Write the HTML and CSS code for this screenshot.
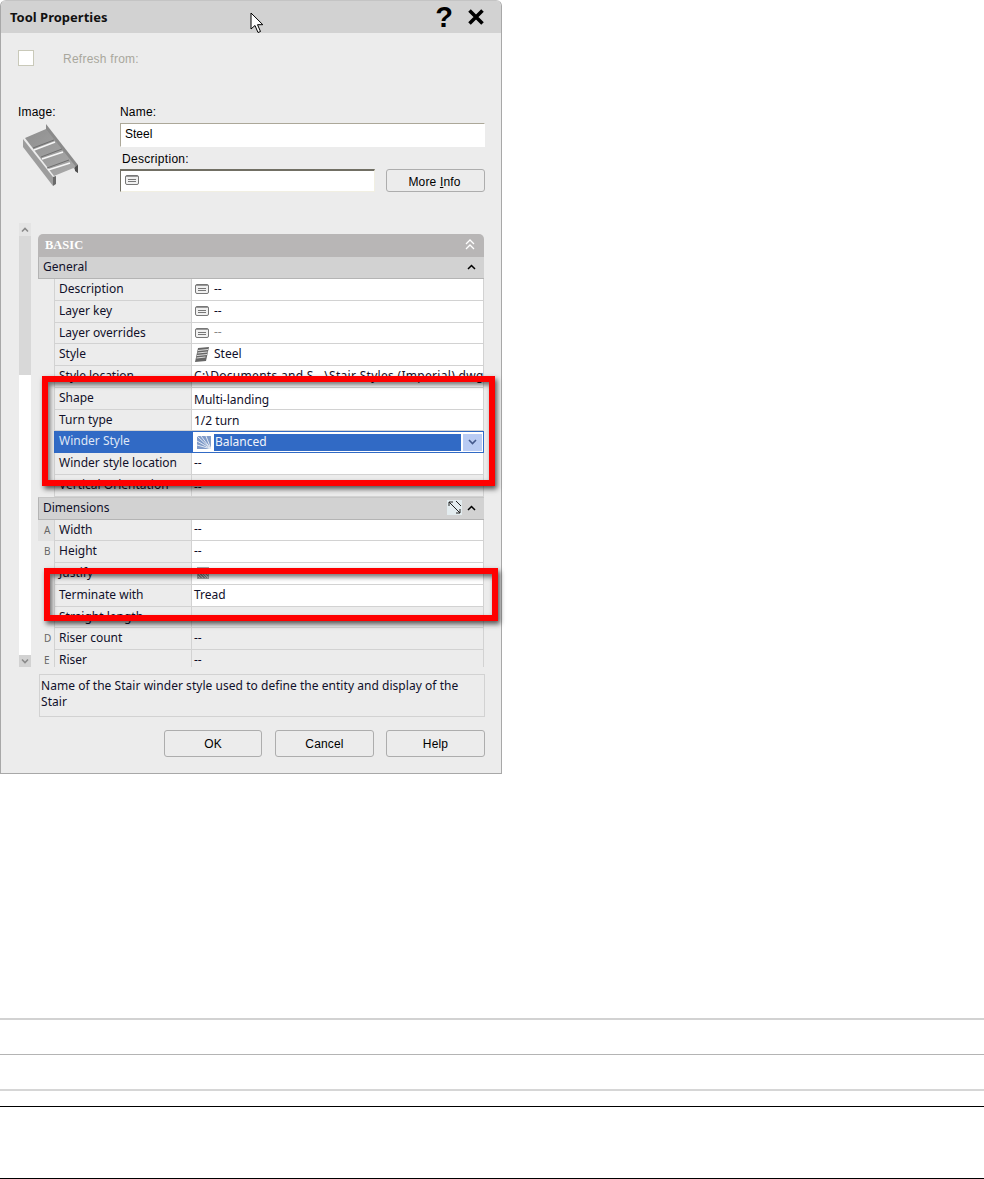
FILE: index.html
```html
<!DOCTYPE html>
<html lang="en">
<head>
<meta charset="utf-8">
<title>Tool Properties</title>
<link rel="stylesheet" href="styles.css">
</head>
<body>
<svg width="0" height="0" class="defs">
  <symbol id="note" viewBox="0 0 14 10">
    <rect x="0.5" y="0.5" width="13" height="9" rx="1.5" fill="#f0f0f0" stroke="#777"/>
    <path d="M1 1.500h12" stroke="#999" fill="none"/>
    <path d="M3 4.500h8M3 6.500h8" stroke="#777" fill="none"/>
  </symbol>
</svg>
<div class="dialog">
  <div class="titlebar">
    <span class="title">Tool Properties</span>
    <span class="help-mark">?</span>
    <svg class="close" width="18" height="16" viewBox="0 0 18 16"><path d="M2.500 1.500l13 13M15.500 1.500l-13 13" stroke="#000" stroke-width="3.600" fill="none"/></svg>
  </div>
  <div class="refresh">
    <span class="check"></span>
    <span class="disabled-label">Refresh from:</span>
  </div>
  <div class="details">
    <div class="image-col">
      <div class="ui-label">Image:</div>
      <svg class="stair" width="58" height="64" viewBox="22 124 58 64">
        <defs>
          <linearGradient id="tread" x1="0" y1="0" x2="1" y2="1">
            <stop offset="0" stop-color="#8f8f8f"/>
            <stop offset="1" stop-color="#aaaaaa"/>
          </linearGradient>
        </defs>
        <path d="M46 124l32 41v8l-3-3-29-40z" fill="#8a8a8a"/>
        <path d="M25 138l21-9 30 38-22 9z" fill="url(#tread)"/>
        <path d="M33 148l21-8M41 157l21-8M47 168l22-8" stroke="#6e6e6e" fill="none"/>
        <path d="M34 150l21-8M42 159l21-7M48 170l22-7" stroke="#f6f6f6" stroke-width="1.800" fill="none"/>
        <path d="M23 139l30 38v9L23 147z" fill="#9d9d9d"/>
        <path d="M53 177l3-1v8l-3 2z" fill="#6a6a6a"/>
        <path d="M75 167l3-2v8l-3-2z" fill="#4f4f4f"/>
      </svg>
    </div>
    <div class="fields">
      <div class="ui-label">Name:</div>
      <div class="input name-input">Steel</div>
      <div class="ui-label desc-label">Description:</div>
      <div class="desc-row">
        <div class="input desc-input"><svg class="note" width="14" height="10"><use href="#note"/></svg></div>
        <button class="btn more">More <u>I</u>nfo</button>
      </div>
    </div>
  </div>
  <div class="props">
    <div class="scrollbar">
      <div class="sb-btn">
        <svg width="8" height="6" viewBox="0 0 8 6"><path d="M1 4.500l3-3 3 3" stroke="#8a8a8a" stroke-width="1.600" fill="none"/></svg>
      </div>
      <div class="sb-thumb"></div>
      <div class="sb-track"></div>
      <div class="sb-btn sb-down">
        <svg width="8" height="6" viewBox="0 0 8 6"><path d="M1 1.500l3 3 3-3" stroke="#8a8a8a" stroke-width="1.600" fill="none"/></svg>
      </div>
    </div>
    <div class="grid">
      <div class="basic">
        <span>BASIC</span>
        <svg width="10" height="12" viewBox="0 0 10 12"><path d="M1 5l4-4 4 4M1 10l4-4 4 4" stroke="#fff" stroke-width="1.300" fill="none"/></svg>
      </div>
      <div class="section">
        <span>General</span>
        <svg class="chev" width="9" height="6" viewBox="0 0 9 6"><path d="M1 5l3.500-3.500L8 5" stroke="#000" stroke-width="1.500" fill="none"/></svg>
      </div>
      <div class="row"><span class="key"></span><span class="name">Description</span><span class="val"><svg class="note" width="14" height="10"><use href="#note"/></svg>--</span></div>
      <div class="row"><span class="key"></span><span class="name">Layer key</span><span class="val"><svg class="note" width="14" height="10"><use href="#note"/></svg>--</span></div>
      <div class="row"><span class="key"></span><span class="name">Layer overrides</span><span class="val muted"><svg class="note" width="14" height="10"><use href="#note"/></svg>--</span></div>
      <div class="row"><span class="key"></span><span class="name">Style</span><span class="val">
        <svg class="mini-stair" width="16" height="15" viewBox="0 0 16 15"><path d="M4 1l11-1-3 14-11 1z" fill="#666"/><path d="M4 3.500l10-1M3.500 6l10-1M3 8.500l10-1M2.500 11l9-1" stroke="#ddd" fill="none"/></svg>Steel</span></div>
      <div class="row"><span class="key"></span><span class="name">Style location</span><span class="val path">C:\Documents and S...\Stair Styles (Imperial).dwg</span></div>
      <div class="row"><span class="key"></span><span class="name">Shape</span><span class="val low">Multi-landing</span></div>
      <div class="row"><span class="key"></span><span class="name">Turn type</span><span class="val low">1/2 turn</span></div>
      <div class="row selected"><span class="key"></span><span class="name">Winder Style</span>
        <span class="val combo">
          <svg class="winder" width="14" height="13" viewBox="0 0 14 13"><rect width="14" height="13" fill="#7f9ac8"/><path d="M0 0l14 13M4 0l10 13M9 0l5 13M0 5l14 8M0 9l14 4" stroke="#e4eaf4" fill="none"/></svg>
          <span class="combo-text">Balanced</span>
          <span class="combo-btn"><svg width="9" height="6" viewBox="0 0 9 6"><path d="M1 1l3.500 3.500L8 1" stroke="#44598c" stroke-width="1.600" fill="none"/></svg></span>
        </span>
      </div>
      <div class="row"><span class="key"></span><span class="name">Winder style location</span><span class="val">--</span></div>
      <div class="row off"><span class="key"></span><span class="name">Vertical Orientation</span><span class="val low">--</span></div>
      <div class="section dim">
        <span>Dimensions</span>
        <svg class="dim-icon" width="15" height="15" viewBox="0 0 15 15"><rect width="15" height="15" fill="#e3ecef"/><path d="M2 2l11 11M2 2h4M2 2v4M13 13H9M13 13V9M9 1l5 5" stroke="#222" fill="none"/></svg>
        <svg class="chev" width="9" height="6" viewBox="0 0 9 6"><path d="M1 5l3.500-3.500L8 5" stroke="#000" stroke-width="1.500" fill="none"/></svg>
      </div>
      <div class="row"><span class="key key-a">A</span><span class="name">Width</span><span class="val">--</span></div>
      <div class="row"><span class="key">B</span><span class="name">Height</span><span class="val">--</span></div>
      <div class="row"><span class="key"></span><span class="name">Justify</span><span class="val"><span class="justify"></span></span></div>
      <div class="row"><span class="key"></span><span class="name">Terminate with</span><span class="val">Tread</span></div>
      <div class="row off"><span class="key">C</span><span class="name">Straight length</span><span class="val"></span></div>
      <div class="row off"><span class="key">D</span><span class="name">Riser count</span><span class="val">--</span></div>
      <div class="row off"><span class="key">E</span><span class="name">Riser</span><span class="val">--</span></div>
    </div>
  </div>
  <div class="helpbox">Name of the Stair winder style used to define the entity and display of the Stair</div>
  <div class="actions">
    <button class="btn ok">OK</button>
    <button class="btn cancel">Cancel</button>
    <button class="btn">Help</button>
  </div>
  <div class="callout callout-a"></div>
  <div class="callout callout-b"></div>
  <svg class="cursor" width="14" height="22" viewBox="0 0 14 22"><path d="M1 1v16l4-3.500 3 7 2.500-1-3-6.800h5.300z" fill="#fff" stroke="#000"/></svg>
</div>
<div class="rules">
  <div class="rule rule-a"></div>
  <div class="rule rule-b"></div>
  <div class="rule rule-c"></div>
  <div class="rule rule-d"></div>
  <div class="rule rule-e"></div>
</div>
</body>
</html>
```
FILE: styles.css
```css
* { box-sizing: border-box; }
html, body { margin: 0; padding: 0; background: #fff; }
body { height: 1179px; overflow: hidden; font-family: "Liberation Sans", Arial, sans-serif; font-size: 12px; color: #000; }
.defs { position: absolute; }

.dialog { position: relative; width: 502px; height: 774px; background: #ececec; border: 1px solid #a8a8a8; border-top-color: #c4c4c4; border-radius: 6px 6px 0 0; }

.titlebar { display: flex; align-items: center; height: 32px; padding: 0 16px 0 9px; background: #d2d2d2; border-radius: 5px 5px 0 0; }
.title { flex: 1; font-family: "Noto Sans", sans-serif; font-weight: 700; font-size: 13px; color: #111; }
.help-mark { font-weight: 700; font-size: 29px; line-height: 24px; margin-right: 14px; }
.close { display: block; }

.refresh { display: flex; align-items: center; height: 16px; margin: 17px 0 0 17px; }
.check { width: 16px; height: 16px; background: #fff; border: 1px solid #c9c9b9; }
.disabled-label { margin: 2px 0 0 29px; color: #a9a79c; letter-spacing: 0.25px; }

.details { display: flex; margin: 38px 0 0 17px; height: 92px; }
.image-col { width: 102px; }
.ui-label { height: 19px; padding-top: 1px; line-height: 14px; letter-spacing: 0.2px; }
.stair { display: block; margin: 1px 0 0 4px; }
.fields { width: 365px; }
.name-input { height: 24px; }
.desc-label { margin: 4px 0 0 2px; height: 18px; letter-spacing: 0.3px; }
.input { background: #fff; border: 1px solid; border-color: #aca899 #fff #fff #aca899; padding: 2px 4px; line-height: 16px; }
.desc-row { display: flex; justify-content: space-between; }
.desc-input { width: 255px; height: 23px; border-color: #716f64 #f1efe2 #f1efe2 #716f64; border-top-width: 2px; padding: 4px 4px; }
.desc-input .note { display: block; }

.btn { width: 99px; height: 27px; padding: 0; background: #ececec; border: 1px solid #adadad; border-radius: 3px; font-family: "Liberation Sans", Arial, sans-serif; font-size: 12px; letter-spacing: 0.15px; color: #000; }
.more { height: 23px; padding: 2px 2px 0 0; }
.ok { width: 98px; margin-right: 1px; }

.props { display: flex; height: 444px; margin: 27px 0 0 18px; }
.scrollbar { display: flex; flex-direction: column; width: 12px; }
.sb-btn { display: flex; align-items: center; justify-content: center; height: 13px; background: #e4e4e4; }
.sb-down { height: 12px; background: #d2d2d2; }
.sb-thumb { height: 139px; background: #d8d8d8; }
.sb-track { flex: 1; background: #fff; }

.grid { width: 446px; margin: 11px 0 0 7px; height: 433px; overflow: hidden; font-family: "Noto Sans", sans-serif; color: #10102a; }
.basic { display: flex; align-items: center; justify-content: space-between; height: 23px; padding: 0 9px 1px 7px; background: #b8b6b6; border-radius: 5px 5px 0 0; color: #fff; font-family: "Liberation Serif", serif; font-weight: 700; font-size: 12.5px; }
.section { display: flex; align-items: center; height: 22px; padding: 0 8px 1px 4px; background: #d2d2d2; border: 1px solid #b4b4b4; border-width: 0 0 1px 1px; line-height: 20px; }
.section span { flex: 1; }
.dim { height: 23px; border-top-width: 1px; border-top-color: #c6c6c6; }
.dim-icon { margin-right: 5px; }
.chev { display: block; }

.row { display: flex; height: 21.75px; line-height: 20px; }
.key { width: 16px; padding-left: 6px; font-size: 10px; color: #666; }
.key-a { background: #e2e2e2; }
.name { width: 138px; padding-left: 4px; border: 1px solid #d2d2d2; border-width: 0 1px 1px 1px; white-space: nowrap; overflow: hidden; }
.val { flex: 1; display: flex; align-items: center; height: 100%; padding: 0 0 1px 2px; background: #fff; border-bottom: 1px solid #d2d2d2; border-right: 1px solid #d2d2d2; white-space: nowrap; overflow: hidden; }
.val .note { margin: 1px 5px 0 1px; }
.path { letter-spacing: 0.3px; }
.muted { color: #888; }
.low { padding-top: 3px; padding-bottom: 0; }
.off .val { background: #ececec; }
.mini-stair { margin-right: 4px; }
.justify { display: block; width: 12px; height: 12px; margin: 0 0 0 3px; background: repeating-linear-gradient(45deg, #8a8a8a 0 1px, #c8c8c8 1px 2px); border: 1px solid #aaa; }

.selected .name { background: #316ac5; color: #dfe6f5; border-color: #316ac5; }
.combo { padding: 0 1px 0 0; border: 1px solid #316ac5; }
.winder { margin: 0 3px 0 4px; }
.combo-text { display: block; width: 248px; height: 17px; line-height: 16px; padding-left: 1px; background: #316ac5; color: #f0f3fa; }
.combo-btn { display: flex; align-items: center; justify-content: center; width: 19px; height: 17px; margin-left: 2px; background: #b9cbf3; }

.helpbox { width: 446px; height: 43px; margin: 7px 0 0 38px; padding: 3px 1px; border: 1px solid #d2d2d2; font-family: "Noto Sans", sans-serif; line-height: 16px; letter-spacing: 0.04px; color: #10102a; }
.actions { display: flex; justify-content: flex-end; gap: 12px; margin: 13px 16px 0 0; }

.callout { position: absolute; border: solid #fe0000; box-shadow: 2px 3px 5px rgba(0, 0, 0, 0.65), inset 2px 3px 5px rgba(0, 0, 0, 0.55); }
.callout-a { left: 41px; top: 375px; width: 453px; height: 110px; border-width: 6px; }
.callout-b { left: 43px; top: 567px; width: 454px; height: 53px; border-width: 6px; }
.cursor { position: absolute; left: 249px; top: 11px; }

.rules { margin-top: 244px; }
.rule { border-top: 1px solid #000; }
.rule-a { height: 36px; border-top: 2px solid #d2d2d2; }
.rule-b { height: 35px; border-top: 1px solid #b4b4b4; }
.rule-c { height: 17px; border-top: 2px solid #d6d6d6; }
.rule-d { height: 72px; }
.rule-e { height: 1px; }
```
